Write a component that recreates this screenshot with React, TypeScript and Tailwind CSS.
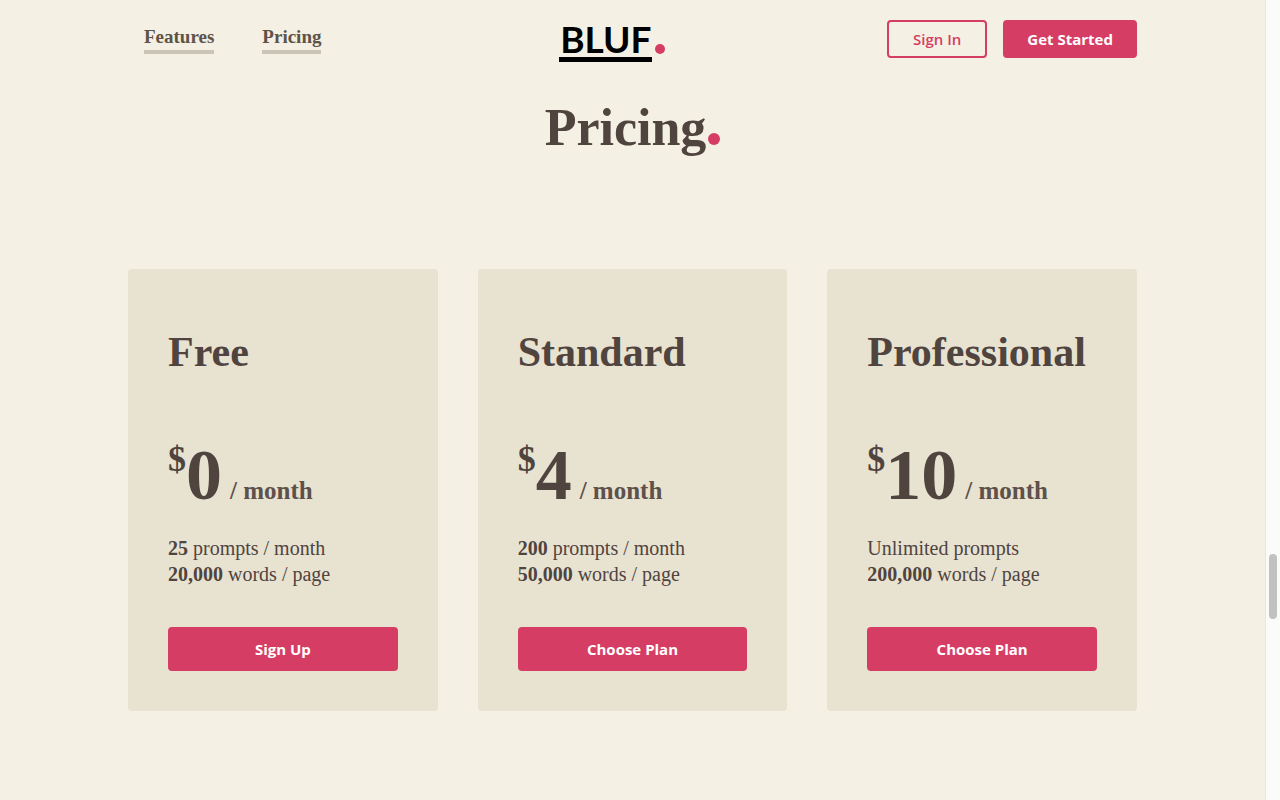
import React from "react";

interface Plan {
  name: string;
  price: number;
  prompts: React.ReactNode;
  words: string;
  action: string;
}

const plans: Plan[] = [
  {
    name: "Free",
    price: 0,
    prompts: (
      <>
        <strong>25</strong> prompts / month
      </>
    ),
    words: "20,000",
    action: "Sign Up",
  },
  {
    name: "Standard",
    price: 4,
    prompts: (
      <>
        <strong>200</strong> prompts / month
      </>
    ),
    words: "50,000",
    action: "Choose Plan",
  },
  {
    name: "Professional",
    price: 10,
    prompts: "Unlimited prompts",
    words: "200,000",
    action: "Choose Plan",
  },
];

const NavLink: React.FC<{ href: string; children: React.ReactNode }> = ({ href, children }) => (
  <a
    href={href}
    className="mx-4 border-b-4 border-[#c9c4b6] text-[19px] font-bold leading-[26px] text-[#5e5348] hover:border-[#d63d64]"
  >
    {children}
  </a>
);

const Logo: React.FC = () => (
  <a href="#top" aria-label="BLUF" className="flex items-end pt-1 text-black">
    <span className="border-b-[5px] border-black px-px font-['Lato',sans-serif] text-[37px] font-bold leading-[36px]">
      BLUF
    </span>
    <span className="mb-2 ml-[3px] size-[10px] rounded-full bg-[#d63d64]" />
  </a>
);

const Header: React.FC = () => (
  <header className="flex h-[78px] items-center justify-between">
    <nav className="flex gap-4">
      <NavLink href="#features">Features</NavLink>
      <NavLink href="#pricing">Pricing</NavLink>
    </nav>

    <Logo />

    <div className="flex gap-4 font-['Open_Sans',sans-serif] text-[15px] leading-[34px]">
      <button type="button" className="rounded border-2 border-[#d63d64] px-6 font-semibold text-[#d63d64]">
        Sign In
      </button>
      <button type="button" className="rounded bg-[#d63d64] px-6 font-bold text-white">
        Get Started
      </button>
    </div>
  </header>
);

const PlanCard: React.FC<{ plan: Plan }> = ({ plan }) => (
  <article className="rounded bg-[#e8e2d0] p-10">
    <h2 className="mb-16 mt-5 text-[42px] font-bold leading-[46px]">{plan.name}</h2>

    <p className="mb-6 flex items-baseline whitespace-nowrap font-bold">
      <span className="self-start text-4xl leading-10">$</span>
      <span className="text-[72px] leading-[72px]">{plan.price}</span>
      <span className="ml-2 text-[25px] leading-8 text-[#5e504a]">/ month</span>
    </p>

    <ul className="mb-10 text-xl leading-[26px]">
      <li>{plan.prompts}</li>
      <li>
        <strong>{plan.words}</strong> words / page
      </li>
    </ul>

    <button
      type="button"
      className="h-11 w-full rounded bg-[#d63d64] font-['Open_Sans',sans-serif] text-[15px] font-bold text-white"
    >
      {plan.action}
    </button>
  </article>
);

export default function App() {
  return (
    <div className="flex min-h-screen bg-[#f4f0e3] font-['Liberation_Serif',serif] text-[#50443f]">
      <div id="top" className="min-w-0 flex-1 px-32">
        <Header />

        <main id="pricing">
          <h1 className="mb-[111px] mt-5 flex items-end justify-center text-[52px] font-bold leading-[60px]">
            Pricing
            <span className="mb-[13px] ml-0.5 size-3 rounded-full bg-[#d63d64]" />
          </h1>

          <section className="grid grid-cols-3 gap-10">
            {plans.map((plan) => (
              <PlanCard key={plan.name} plan={plan} />
            ))}
          </section>
        </main>
      </div>

      {/* Scroll track */}
      <div className="w-[15px] shrink-0 border-l border-[#e6e6e6] bg-[#fbfbfa]">
        <div className="mx-auto mt-[554px] h-[65px] w-2 rounded-full bg-[#c1c1c0]" />
      </div>
    </div>
  );
}
